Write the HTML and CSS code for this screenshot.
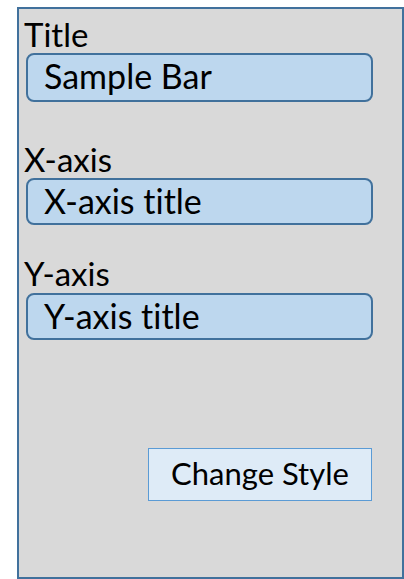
FILE: index.html
```html
<!DOCTYPE html>
<html>
<head>
<meta charset="utf-8">
<link rel="stylesheet" href="styles.css">
</head>
<body>
<div class="panel">
  <div class="field field-title">
    <div class="label">Title</div>
    <div class="box">Sample Bar</div>
  </div>
  <div class="field field-x">
    <div class="label">X-axis</div>
    <div class="box">X-axis title</div>
  </div>
  <div class="field field-y">
    <div class="label">Y-axis</div>
    <div class="box">Y-axis title</div>
  </div>
  <div class="actions">
    <div class="button">Change Style</div>
  </div>
</div>
</body>
</html>
```
FILE: styles.css
```css
html, body {
  margin: 0;
  padding: 0;
  background: #ffffff;
}
body {
  font-family: Lato, "Open Sans", sans-serif;
  font-variant-ligatures: none;
  color: #000;
}
.panel {
  box-sizing: border-box;
  margin: 7px 0 0 17px;
  width: 387px;
  height: 572px;
  border: 2px solid #41719c;
  background: #d9d9d9;
  padding: 9px 0 0 5px;
  display: flex;
  flex-direction: column;
}
.field {
  display: flex;
  flex-direction: column;
}
.field-x {
  margin-top: 41px;
}
.field-y {
  margin-top: 32px;
}
.label {
  font-size: 33px;
  line-height: 33px;
  height: 33px;
}
.box {
  box-sizing: border-box;
  margin: 2px 0 0 2px;
  width: 347px;
  height: 47px;
  border: 2px solid #41719c;
  border-radius: 8px;
  background: #bdd7ee;
  font-size: 34px;
  line-height: 41px;
  padding-left: 16px;
  overflow: hidden;
}
.field-title .box {
  height: 49px;
}
.field-y .box {
  margin-top: 3px;
}
.actions {
  display: flex;
  justify-content: flex-end;
  margin-top: 108px;
  padding-right: 30px;
}
.button {
  box-sizing: border-box;
  width: 224px;
  height: 53px;
  border: 1px solid #5b9bd5;
  background: #deebf7;
  font-size: 31px;
  line-height: 48px;
  text-align: center;
}
```
